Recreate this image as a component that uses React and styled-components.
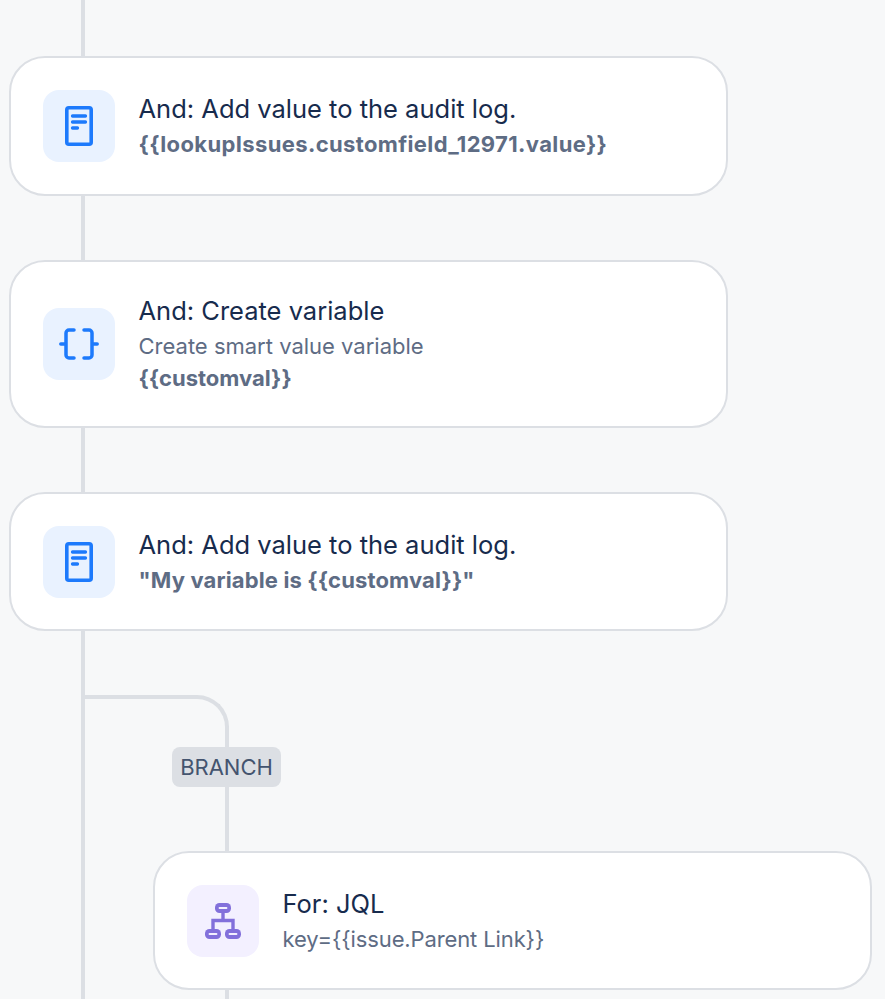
import React from "react";
import styled, { createGlobalStyle } from "styled-components";

const Global = createGlobalStyle`
  html, body { margin: 0; padding: 0; background: #f7f8f9; }
  body { height: 999px; overflow: hidden; font-family: Inter, "Liberation Sans", sans-serif; }
`;
const LINE = "#dcdfe4";

const Page = styled.div`
  display: flex;
  flex-direction: column;
  width: 885px;
  height: 999px;
  overflow: hidden;
  padding-left: 9px;
  box-sizing: border-box;
`;
const Rail = styled.div`
  width: 4px;
  height: ${(p) => p.$h}px;
  margin-left: ${(p) => p.$left ?? 72}px;
  background: ${LINE};
  flex: none;
`;
const Card = styled.div`
  box-sizing: border-box;
  flex: none;
  width: 719px;
  height: ${(p) => p.$h}px;
  margin-left: ${(p) => p.$left ?? 0}px;
  display: flex;
  align-items: center;
  gap: 23.5px;
  padding-left: 32px;
  background: #fff;
  border: 2px solid ${LINE};
  border-radius: 36px;
`;
const Tile = styled.div`
  width: 72px;
  height: 72px;
  flex: none;
  display: flex;
  align-items: center;
  justify-content: center;
  border-radius: 16px;
  background: ${(p) => p.$bg};
`;
const Texts = styled.div`
  display: flex;
  flex-direction: column;
`;
const Title = styled.div`
  font-size: 25.5px;
  line-height: 34px;
  margin-bottom: 2px;
  color: #172b4d;
`;
const Sub = styled.div`
  font-size: 22px;
  line-height: 32px;
  color: #5e6c84;
  font-weight: ${(p) => (p.$bold ? 700 : 400)};
  letter-spacing: ${(p) => p.$track ?? 0}px;
`;
const BranchSection = styled.div`
  flex: 1;
  display: flex;
  flex-direction: column;
  margin-left: 72px;
  padding-top: 64px;
  border-left: 4px solid ${LINE};
`;
const Elbow = styled.div`
  box-sizing: border-box;
  flex: none;
  width: 144px;
  height: 52px;
  border-top: 4px solid ${LINE};
  border-right: 4px solid ${LINE};
  border-top-right-radius: 32px;
`;
const Badge = styled.div`
  flex: none;
  align-self: flex-start;
  box-sizing: border-box;
  width: 109px;
  height: 40px;
  margin-left: 87px;
  display: flex;
  align-items: center;
  justify-content: center;
  border-radius: 8px;
  background: #dcdfe4;
  color: #44546f;
  font-size: 22px;
`;

const Doc = () => (
  <svg width="28" height="40" viewBox="0 0 28 40" fill="none" stroke="#1d7afc" strokeLinecap="round">
    <rect x="1.8" y="1.8" width="24.4" height="36.4" rx="2" strokeWidth="3.6" />
    <path d="M7.500 10h13M7.500 16h13M7.500 22h5" strokeWidth="3.300" />
  </svg>
);
const Braces = () => (
  <svg width="40" height="32" viewBox="0 0 40 32" fill="none" stroke="#1d7afc" strokeWidth="3.500" strokeLinecap="round" strokeLinejoin="round">
    <path d="M15 2h-5a3 3 0 0 0-3 3v22a3 3 0 0 0 3 3h5M1.800 16H7" />
    <path d="M25 2h5a3 3 0 0 1 3 3v22a3 3 0 0 1-3 3h-5M38.200 16H33" />
  </svg>
);
const Tree = () => (
  <svg width="36" height="36" viewBox="0 0 36 36" fill="none">
    <path d="M18 10v8M8 26v-8.500h20V26" stroke="#8270db" strokeWidth="3.400" />
    <rect x="10" y="0" width="16" height="10" rx="4.500" fill="#8270db" />
    <rect x="0" y="26" width="16" height="10" rx="4.500" fill="#8270db" />
    <rect x="20" y="26" width="16" height="10" rx="4.500" fill="#8270db" />
    <path d="M14.500 5h7M4.500 31h7M24.500 31h7" stroke="#f3f0ff" strokeWidth="1.800" strokeLinecap="round" />
  </svg>
);

export default function App() {
  return (
    <Page>
      <Global />
      <Rail $h={56} />
      <Card $h={139.5}>
        <Tile $bg="#e9f2ff"><Doc /></Tile>
        <Texts>
          <Title>And: Add value to the audit log.</Title>
          <Sub $bold $track={0.37}>{"{{lookupIssues.customfield_12971.value}}"}</Sub>
        </Texts>
      </Card>
      <Rail $h={64.5} />
      <Card $h={167.5}>
        <Tile $bg="#e9f2ff"><Braces /></Tile>
        <Texts>
          <Title>And: Create variable</Title>
          <Sub>Create smart value variable</Sub>
          <Sub $bold>{"{{customval}}"}</Sub>
        </Texts>
      </Card>
      <Rail $h={64.5} />
      <Card $h={139}>
        <Tile $bg="#e9f2ff"><Doc /></Tile>
        <Texts>
          <Title>And: Add value to the audit log.</Title>
          <Sub $bold $track={0.14}>{'"My variable is {{customval}}"'}</Sub>
        </Texts>
      </Card>
      <BranchSection>
        <Elbow />
        <Badge>BRANCH</Badge>
        <Rail $h={64} $left={140} />
        <Card $h={139} $left={68}>
          <Tile $bg="#f3f0ff"><Tree /></Tile>
          <Texts>
            <Title>For: JQL</Title>
            <Sub $track={-0.12}>{"key={{issue.Parent Link}}"}</Sub>
          </Texts>
        </Card>
        <Rail $h={20} $left={140} />
      </BranchSection>
    </Page>
  );
}
